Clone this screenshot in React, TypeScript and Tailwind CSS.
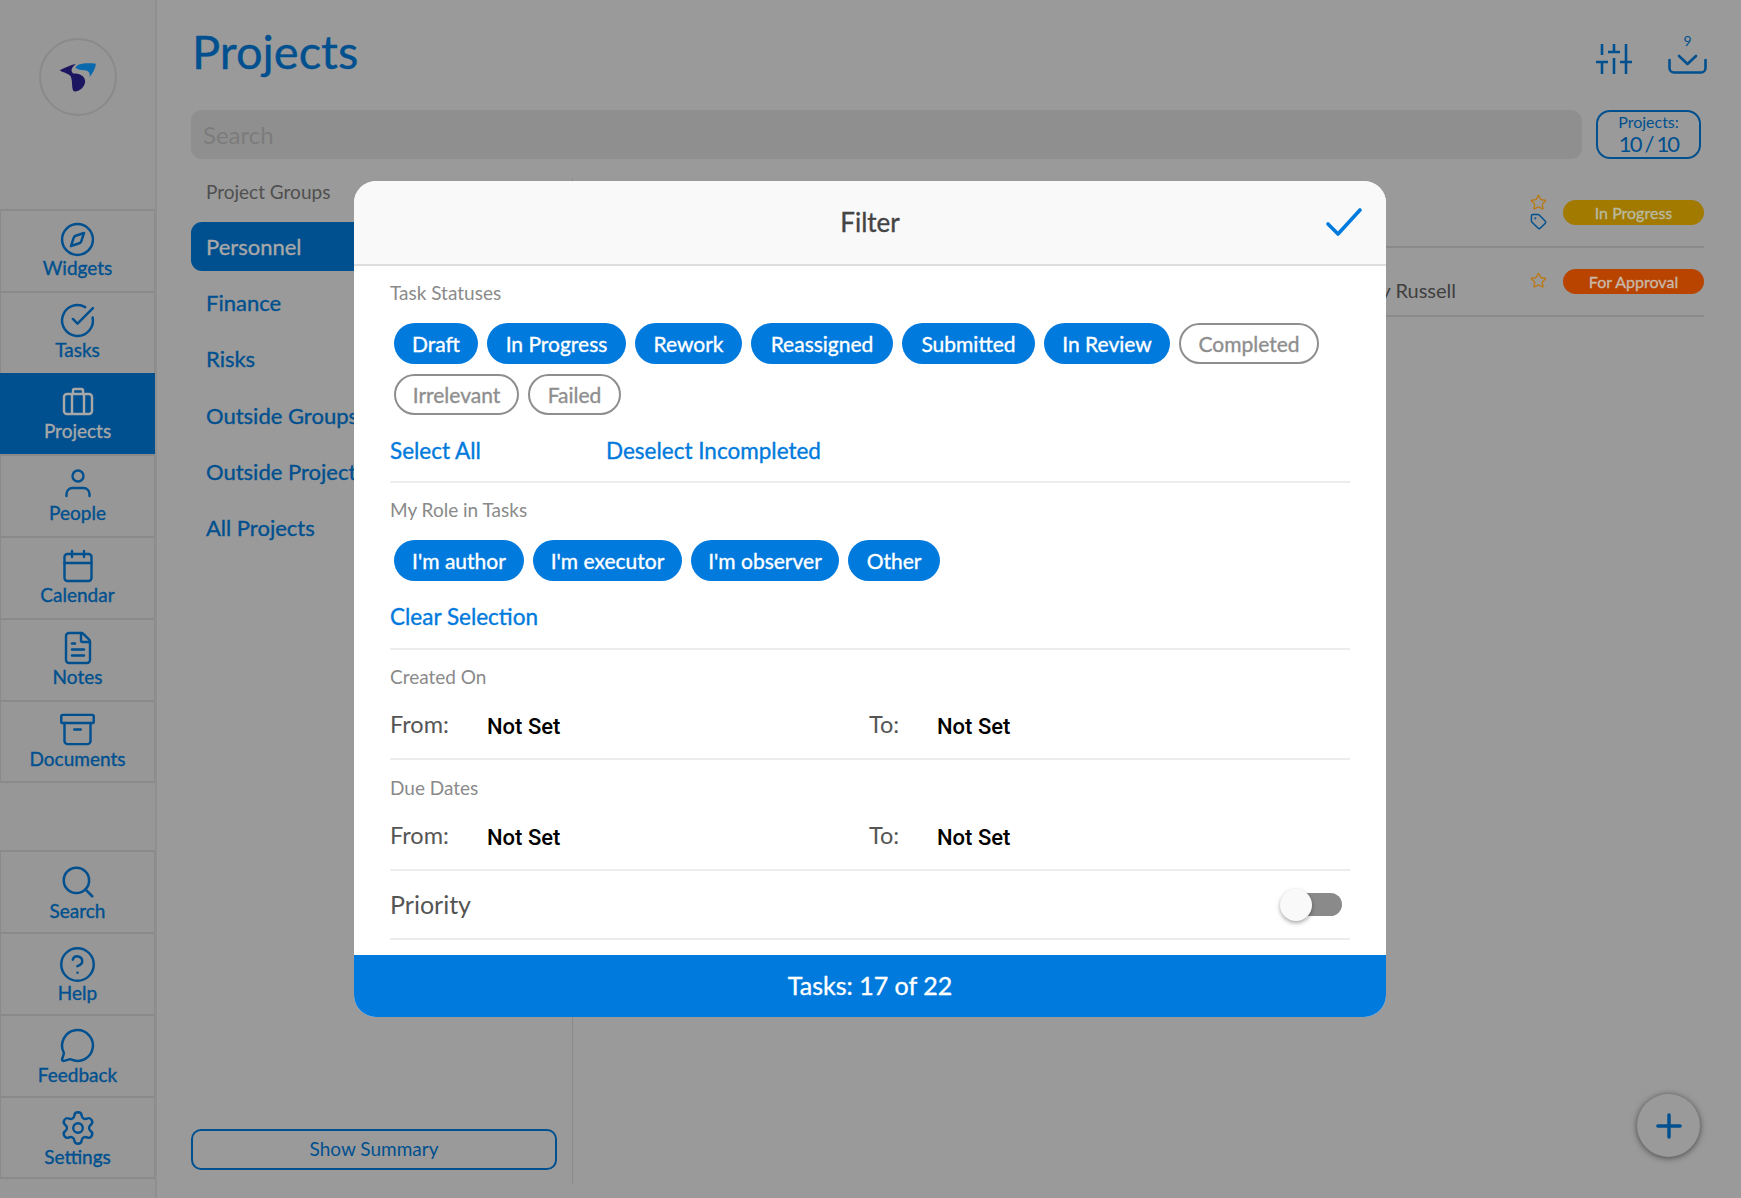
import React from 'react';
import {
  Compass,
  CircleCheckBig,
  Calendar,
  FileText,
  Archive,
  Search,
  CircleHelp,
  MessageCircle,
  Settings,
  Star,
  Tag,
  Plus,
} from 'lucide-react';

const BLUE = 'text-[#00508f]';
const MEDIUM = '[-webkit-text-stroke:0.35px_currentColor]';

function BriefcaseIcon() {
  return (
    <svg width="32" height="32" viewBox="0 0 32 32" fill="none" stroke="currentColor" strokeWidth="2.4" strokeLinejoin="round">
      <rect x="2" y="8" width="28" height="20" rx="3" />
      <path d="M11 8V4.5a1.5 1.5 0 0 1 1.5-1.5h7A1.5 1.5 0 0 1 21 4.5V8" />
      <path d="M10 8v20M22 8v20" />
    </svg>
  );
}

function PersonIcon() {
  return (
    <svg width="32" height="32" viewBox="0 0 32 32" fill="none" stroke="currentColor" strokeWidth="2.4" strokeLinecap="round">
      <circle cx="16" cy="8" r="5.5" />
      <path d="M4.5 28v-2a6 6 0 0 1 6-6h11a6 6 0 0 1 6 6v2" />
    </svg>
  );
}

function SideItem({ icon, label, active, low }: { icon: React.ReactNode; label: string; active?: boolean; low?: boolean }) {
  return (
    <div
      className={
        active
          ? `h-[81.75px] w-[155px] flex flex-col items-center pt-[13px] gap-[3px] bg-[#00508f] text-[#a8a8a8] ${MEDIUM}`
          : `h-[81.75px] w-[155px] flex flex-col items-center ${low ? 'pt-[14px]' : 'pt-3'} gap-[3px] border-t-2 border-x border-[#8a8a8a] text-[#00508f] ${MEDIUM}`
      }
    >
      <div className="h-8 flex items-center justify-center [-webkit-text-stroke:0]">{icon}</div>
      <span className="text-[19px] leading-[20px]">{label}</span>
    </div>
  );
}

function Chip({ label, width, on = true }: { label: string; width: string; on?: boolean }) {
  return (
    <span
      className={
        on
          ? `${width} h-[41px] flex items-center justify-center rounded-full bg-[#007adc] text-white text-[21px] ${MEDIUM}`
          : `${width} h-[41px] flex items-center justify-center rounded-full border-[2.5px] border-[#8e8e8e] bg-white text-[#8e8e8e] text-[21px] ${MEDIUM}`
      }
    >
      {label}
    </span>
  );
}

function DateRow() {
  return (
    <div className="mt-[21px] flex items-center h-[30px] text-[23.5px] text-[#555]">
      <span className="w-[97px]">From:</span>
      <span className="w-[382px] mt-[2px] text-[22px] font-['Roboto',sans-serif] font-medium text-black">Not Set</span>
      <span className="w-[68px]">To:</span>
      <span className="mt-[2px] text-[22px] font-['Roboto',sans-serif] font-medium text-black">Not Set</span>
    </div>
  );
}

function FilterModal() {
  return (
    <div className="absolute left-[354px] top-[181px] w-[1032px] h-[836px] rounded-[22px] overflow-hidden bg-white flex flex-col">
      <div className="h-[85px] shrink-0 bg-[#f9f9f9] border-b-2 border-[#dddddd] flex items-center justify-center relative">
        <span className={`text-[26px] text-[#444] ${MEDIUM}`}>Filter</span>
        <svg className="absolute right-[23px] top-[26px]" width="38" height="30" viewBox="0 0 38 30" fill="none" stroke="#007adc" strokeWidth="3.6" strokeLinecap="round" strokeLinejoin="round">
          <path d="M3 17l10 10L35 3" />
        </svg>
      </div>

      <div className="flex-1 px-[36px]">
        <div className="pt-[15px] pb-[16px] border-b-2 border-[#ececec]">
          <div className="text-[19px] leading-[24px] text-[#8a8a8a]">Task Statuses</div>
          <div className="mt-[18px] ml-[4px] flex flex-wrap gap-x-[9px] gap-y-[10px]">
            <Chip label="Draft" width="w-[84px]" />
            <Chip label="In Progress" width="w-[139px]" />
            <Chip label="Rework" width="w-[107px]" />
            <Chip label="Reassigned" width="w-[142px]" />
            <Chip label="Submitted" width="w-[133px]" />
            <Chip label="In Review" width="w-[126px]" />
            <Chip label="Completed" width="w-[140px]" on={false} />
            <Chip label="Irrelevant" width="w-[125px]" on={false} />
            <Chip label="Failed" width="w-[93px]" on={false} />
          </div>
          <div className={`mt-[22px] flex text-[22.5px] leading-[28px] text-[#007adc] ${MEDIUM}`}>
            <span className="w-[216px]">Select All</span>
            <span>Deselect Incompleted</span>
          </div>
        </div>

        <div className="pt-[15px] pb-[17px] border-b-2 border-[#ececec]">
          <div className="text-[19px] leading-[24px] text-[#8a8a8a]">My Role in Tasks</div>
          <div className="mt-[18px] ml-[4px] flex gap-x-[9px]">
            <Chip label="I'm author" width="w-[130px]" />
            <Chip label="I'm executor" width="w-[149px]" />
            <Chip label="I'm observer" width="w-[148px]" />
            <Chip label="Other" width="w-[92px]" />
          </div>
          <div className={`mt-[22px] text-[22.5px] leading-[28px] text-[#007adc] ${MEDIUM}`}>Clear Selection</div>
        </div>

        <div className="pt-[15px] pb-[18px] border-b-2 border-[#ececec]">
          <div className="text-[19px] leading-[24px] text-[#8a8a8a]">Created On</div>
          <DateRow />
        </div>

        <div className="pt-[16px] pb-[18px] border-b-2 border-[#ececec]">
          <div className="text-[19px] leading-[24px] text-[#8a8a8a]">Due Dates</div>
          <DateRow />
        </div>

        <div className="h-[69px] flex items-center justify-between border-b-2 border-[#ececec]">
          <span className="text-[25px] text-[#555]">Priority</span>
          <div className="mr-[8px] flex items-center">
            <div className="z-10 w-[32px] h-[32px] rounded-full bg-[#f9f9f9] shadow-[0_2px_4px_rgba(0,0,0,0.35)]" />
            <div className="-ml-[16px] w-[46px] h-[23px] rounded-r-full bg-[#8a8a8a]" />
          </div>
        </div>
      </div>

      <div className={`h-[62px] shrink-0 bg-[#007adc] flex items-center justify-center text-white text-[25px] ${MEDIUM}`}>
        Tasks: 17 of 22
      </div>
    </div>
  );
}

export default function App() {
  return (
    <div className="relative h-screen w-full overflow-hidden flex bg-[#9a9a9a] font-['Lato',sans-serif]">
      <aside className="w-[157px] shrink-0 flex flex-col bg-[#979797] border-r-2 border-[#8f8f8f]">
        <div className="h-[209px] shrink-0 pt-[38px] pl-[39px]">
          <div className="w-[78px] h-[78px] rounded-full border-2 border-[#8a8a8a] flex items-center justify-center">
            <svg width="38" height="30" viewBox="115 125 116 92">
              <path d="M117 150C130 143 150 134 167 130C155 140 148 150 158 160C175 160 195 165 195 185C193 205 175 217 160 215C152 205 158 185 150 168C142 158 125 157 117 150Z" fill="#1c1560" />
              <path d="M165 142C172 132 185 127 228 130C226 145 218 160 208 172C212 158 205 150 190 150C180 150 170 148 165 142Z" fill="#0a69ad" />
            </svg>
          </div>
        </div>
        <SideItem icon={<Compass size={37} strokeWidth={1.6} />} label="Widgets" />
        <SideItem icon={<CircleCheckBig size={37} strokeWidth={1.6} />} label="Tasks" />
        <SideItem icon={<BriefcaseIcon />} label="Projects" active />
        <SideItem icon={<PersonIcon />} label="People" />
        <SideItem icon={<Calendar size={36} strokeWidth={1.6} />} label="Calendar" />
        <SideItem icon={<FileText size={36} strokeWidth={1.6} />} label="Notes" />
        <div className="border-b-2 border-[#8a8a8a] w-[155px]">
          <SideItem icon={<Archive size={39} strokeWidth={1.5} />} label="Documents" />
        </div>
        <div className="mt-[67px]">
          <SideItem low icon={<Search size={38} strokeWidth={1.6} />} label="Search" />
          <SideItem low icon={<CircleHelp size={39} strokeWidth={1.5} />} label="Help" />
          <SideItem low icon={<MessageCircle size={37} strokeWidth={1.6} />} label="Feedback" />
          <div className="border-b-2 border-[#8a8a8a] w-[155px]">
            <SideItem low icon={<Settings size={38} strokeWidth={1.5} />} label="Settings" />
          </div>
        </div>
      </aside>

      <main className="flex-1 min-w-0 flex flex-col pl-[34px] pr-[37px] pb-[14px]">
        <header className="h-[110px] shrink-0 flex items-end justify-between pb-[36px]">
          <h1 className={`self-start mt-[16px] pl-[1px] text-[47px] ${MEDIUM} ${BLUE}`}>Projects</h1>
          <div className={`flex items-end gap-[36px] -mr-[3px] ${BLUE}`}>
            <svg width="36" height="30" viewBox="0 0 36 30" fill="none" stroke="currentColor" strokeWidth="2.6">
              <path d="M6 0v11M6 18v12M0 18h12M18 0v8M12 8h12M18 14v16M30 0v18M24 18h12M30 18v12" />
            </svg>
            <div className="relative w-[39px] h-[37px]">
              <span className="absolute left-0 right-0 -top-[4px] text-center text-[14px] leading-[16px]">9</span>
              <svg className="absolute left-0 bottom-0" width="39" height="20" viewBox="0 0 39 20" fill="none" stroke="currentColor" strokeWidth="2.6" strokeLinecap="round" strokeLinejoin="round">
                <path d="M1.5 6v8a4.5 4.5 0 0 0 4.5 4.5h27a4.5 4.5 0 0 0 4.5-4.5V6" />
                <path d="M11 2l8.5 8L28 2" />
              </svg>
            </div>
          </div>
        </header>

        <div className="h-[49px] shrink-0 flex gap-[14px] pr-[3px]">
          <div className="flex-1 rounded-[11px] bg-[#8f8f8f] flex items-center pl-[12px] text-[24px] text-[#7c7c7c]">Search</div>
          <div className={`w-[105px] rounded-[14px] border-2 border-[#00508f] flex flex-col items-center justify-center ${BLUE}`}>
            <span className="text-[16px] leading-[18px]">Projects:</span>
            <span className="mt-[1px] text-[22px] leading-[24px] tracking-[-1.8px]">10 / 10</span>
          </div>
        </div>

        <div className="flex-1 min-h-0 mt-[19px] flex">
          <div className="w-[382px] shrink-0 border-r border-[#8a8a8a] pr-[15px] flex flex-col">
            <div className="pl-[15px] pt-[2px] h-[44px] text-[19px] leading-[24px] text-[#4f4f4f]">Project Groups</div>
            <div className={`flex flex-col gap-[7.2px] text-[22px] ${MEDIUM}`}>
              <div className="h-[49px] rounded-[11px] pl-[15px] flex items-center bg-[#00508f] text-[#a8a8a8]">Personnel</div>
              {['Finance', 'Risks', 'Outside Groups', 'Outside Projects', 'All Projects'].map((g) => (
                <div key={g} className={`h-[49px] pl-[15px] flex items-center ${BLUE}`}>{g}</div>
              ))}
            </div>
            <div className={`mt-auto mb-[14px] h-[41px] rounded-[10px] border-2 border-[#00508f] flex items-center justify-center text-[19px] ${BLUE}`}>
              Show Summary
            </div>
          </div>

          <div className="flex-1 min-w-0 mt-[1px]">
            <div className="h-[69px] flex items-center justify-end border-b-2 border-[#8a8a8a]">
              <div className="flex flex-col items-center gap-[2px] mr-[16px] mb-[2px]">
                <Star size={17} className="text-[#b97a1c]" />
                <Tag size={17} className={BLUE} />
              </div>
              <span className={`w-[141px] h-[25px] rounded-full bg-[#a27a00] text-[#b9b9a0] text-[16px] flex items-center justify-center ${MEDIUM}`}>In Progress</span>
            </div>
            <div className="h-[69px] flex items-center justify-end border-b-2 border-[#8a8a8a]">
              <span className="flex-1 mt-[16px] pr-[74px] text-right text-[20px] text-[#3f3f3f]">Henry Russell</span>
              <Star size={17} className="mr-[16px] mb-[2px] text-[#b97a1c]" />
              <span className={`w-[141px] h-[25px] rounded-full bg-[#b84400] text-[#c9b8a8] text-[16px] flex items-center justify-center ${MEDIUM}`}>For Approval</span>
            </div>
          </div>
        </div>
      </main>

      <FilterModal />

      <div className={`absolute right-[41px] bottom-[41px] w-[63px] h-[63px] rounded-full bg-[#9a9a9a] shadow-[0_1px_6px_rgba(0,0,0,0.55)] flex items-center justify-center ${BLUE}`}>
        <Plus size={38} strokeWidth={2.2} />
      </div>
    </div>
  );
}
